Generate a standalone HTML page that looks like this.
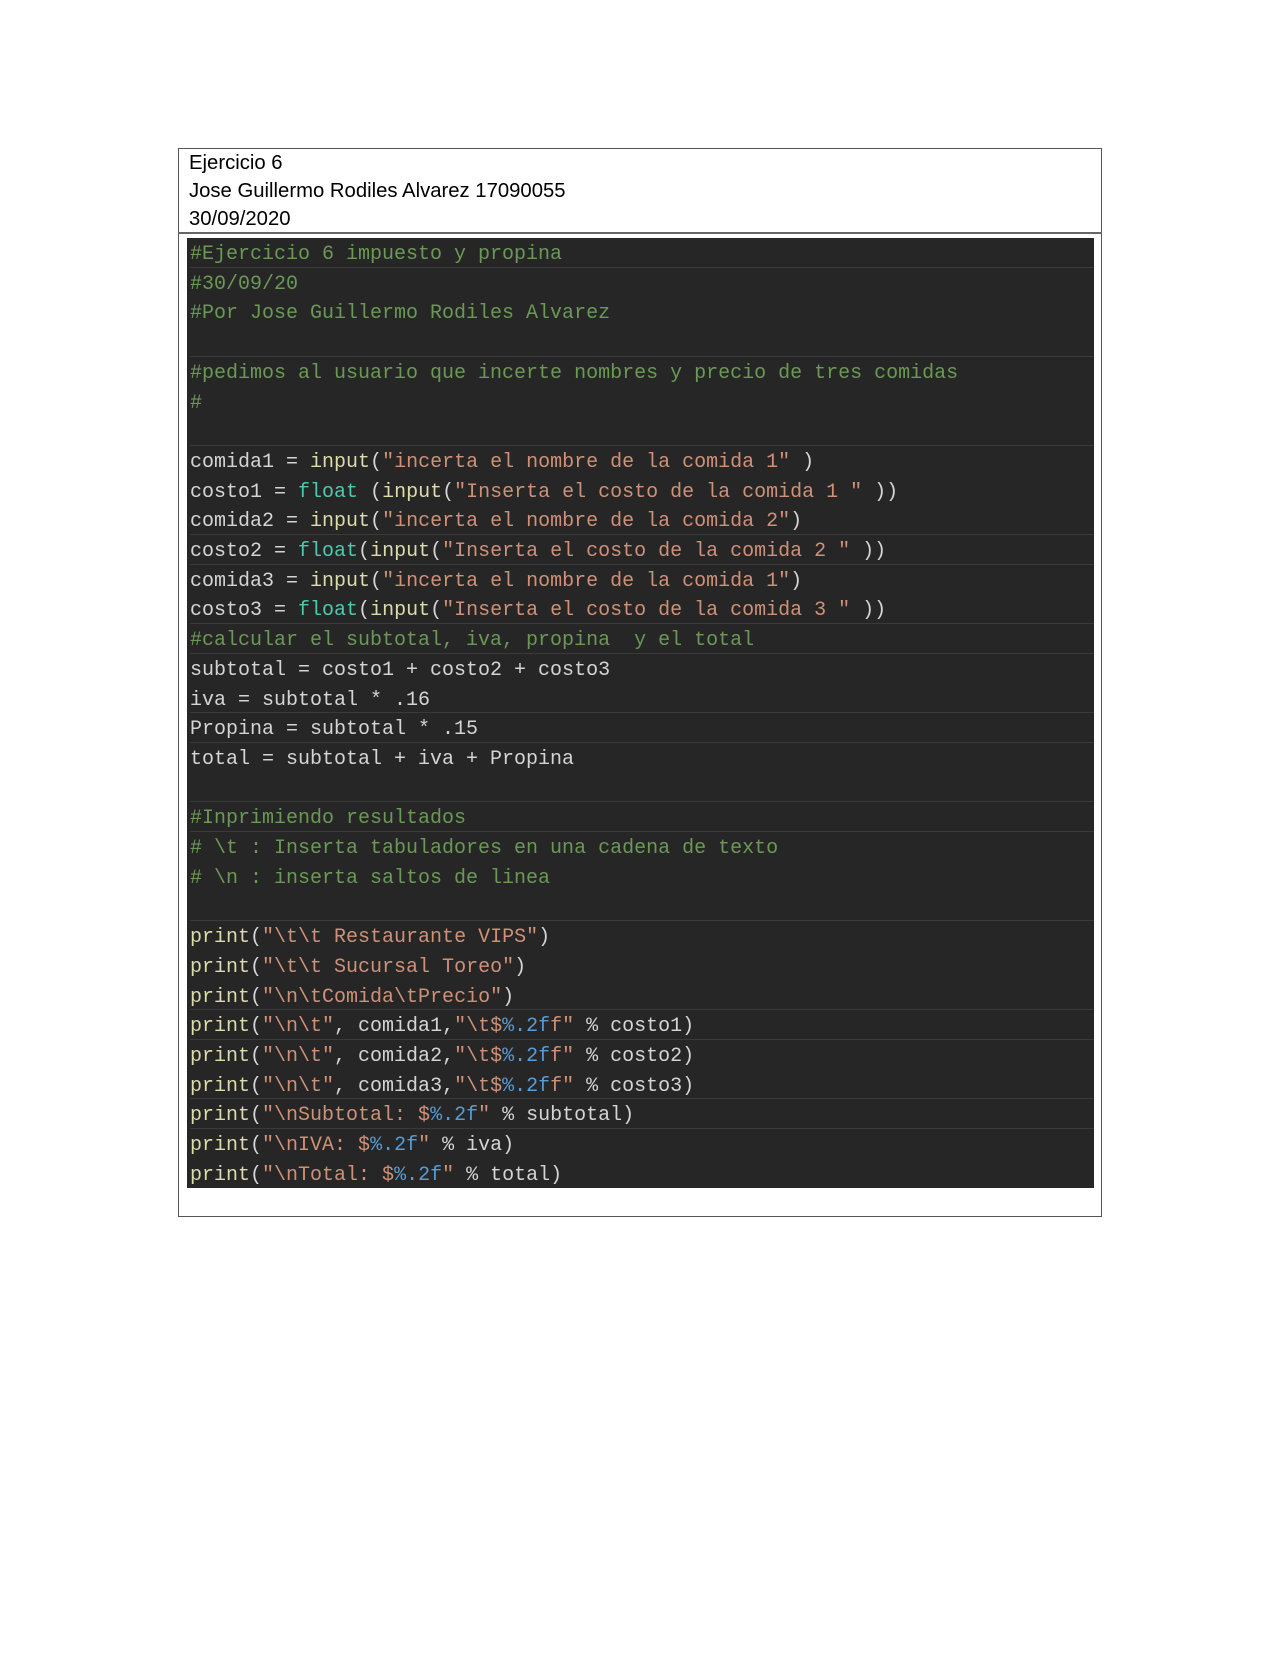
<!DOCTYPE html>
<html><head><meta charset="utf-8"><style>
html,body{margin:0;padding:0;background:#fff;width:1280px;height:1656px;overflow:hidden}
.box{position:absolute;left:178px;top:148px;width:924px;height:1069px;border:1.5px solid #555;box-sizing:border-box}
.hdr{position:absolute;left:189px;font-family:"Liberation Sans",sans-serif;font-size:20.3px;color:#000}
.sep{position:absolute;left:178px;top:232px;width:924px;height:2px;background:#666}
.code{position:absolute;left:187px;top:238px;width:907px;height:950px;background:#262626}
.ln{position:absolute;left:3px;height:29.7px;line-height:29.7px;font-family:"Liberation Mono",monospace;font-size:20px;color:#d4d4d4;white-space:pre;width:904px;padding-top:2px;box-sizing:border-box}
.b{border-bottom:1px solid #3a3a3a}
.c{color:#6a9955}.s{color:#ce9178}.f{color:#dcdcaa}.t{color:#4ec9b0}.k{color:#569cd6}
</style></head><body>
<div class="box"></div>
<div class="hdr" style="top:152px">Ejercicio 6</div>
<div class="hdr" style="top:180px">Jose Guillermo Rodiles Alvarez 17090055</div>
<div class="hdr" style="top:208px">30/09/2020</div>
<div class="sep"></div>
<div class="code">
<div class="ln c b" style="top:0px">#Ejercicio 6 impuesto y propina</div>
<div class="ln c" style="top:29.7px">#30/09/20</div>
<div class="ln c" style="top:59.4px">#Por Jose Guillermo Rodiles Alvarez</div>
<div class="ln b" style="top:89.1px"> </div>
<div class="ln c" style="top:118.8px">#pedimos al usuario que incerte nombres y precio de tres comidas</div>
<div class="ln c" style="top:148.5px">#</div>
<div class="ln b" style="top:178.2px"> </div>
<div class="ln" style="top:207.9px">comida1 = <span class="f">input</span>(<span class="s">"incerta el nombre de la comida 1"</span> )</div>
<div class="ln" style="top:237.6px">costo1 = <span class="t">float</span> (<span class="f">input</span>(<span class="s">"Inserta el costo de la comida 1 "</span> ))</div>
<div class="ln b" style="top:267.3px">comida2 = <span class="f">input</span>(<span class="s">"incerta el nombre de la comida 2"</span>)</div>
<div class="ln b" style="top:297px">costo2 = <span class="t">float</span>(<span class="f">input</span>(<span class="s">"Inserta el costo de la comida 2 "</span> ))</div>
<div class="ln" style="top:326.7px">comida3 = <span class="f">input</span>(<span class="s">"incerta el nombre de la comida 1"</span>)</div>
<div class="ln b" style="top:356.4px">costo3 = <span class="t">float</span>(<span class="f">input</span>(<span class="s">"Inserta el costo de la comida 3 "</span> ))</div>
<div class="ln c b" style="top:386.1px">#calcular el subtotal, iva, propina  y el total</div>
<div class="ln" style="top:415.8px">subtotal = costo1 + costo2 + costo3</div>
<div class="ln b" style="top:445.5px">iva = subtotal * .16</div>
<div class="ln b" style="top:475.2px">Propina = subtotal * .15</div>
<div class="ln" style="top:504.9px">total = subtotal + iva + Propina</div>
<div class="ln b" style="top:534.6px"> </div>
<div class="ln c b" style="top:564.3px">#Inprimiendo resultados</div>
<div class="ln c" style="top:594px"># \t : Inserta tabuladores en una cadena de texto</div>
<div class="ln c" style="top:623.7px"># \n : inserta saltos de linea</div>
<div class="ln b" style="top:653.4px"> </div>
<div class="ln" style="top:683.1px"><span class="f">print</span>(<span class="s">"\t\t Restaurante VIPS"</span>)</div>
<div class="ln" style="top:712.8px"><span class="f">print</span>(<span class="s">"\t\t Sucursal Toreo"</span>)</div>
<div class="ln b" style="top:742.5px"><span class="f">print</span>(<span class="s">"\n\tComida\tPrecio"</span>)</div>
<div class="ln b" style="top:772.2px"><span class="f">print</span>(<span class="s">"\n\t"</span>, comida1,<span class="s">"\t$<span class="k">%.2f</span>f"</span> % costo1)</div>
<div class="ln" style="top:801.9px"><span class="f">print</span>(<span class="s">"\n\t"</span>, comida2,<span class="s">"\t$<span class="k">%.2f</span>f"</span> % costo2)</div>
<div class="ln b" style="top:831.6px"><span class="f">print</span>(<span class="s">"\n\t"</span>, comida3,<span class="s">"\t$<span class="k">%.2f</span>f"</span> % costo3)</div>
<div class="ln b" style="top:861.3px"><span class="f">print</span>(<span class="s">"\nSubtotal: $<span class="k">%.2f</span>"</span> % subtotal)</div>
<div class="ln" style="top:891px"><span class="f">print</span>(<span class="s">"\nIVA: $<span class="k">%.2f</span>"</span> % iva)</div>
<div class="ln" style="top:920.7px"><span class="f">print</span>(<span class="s">"\nTotal: $<span class="k">%.2f</span>"</span> % total)</div>
</div>
</body></html>
